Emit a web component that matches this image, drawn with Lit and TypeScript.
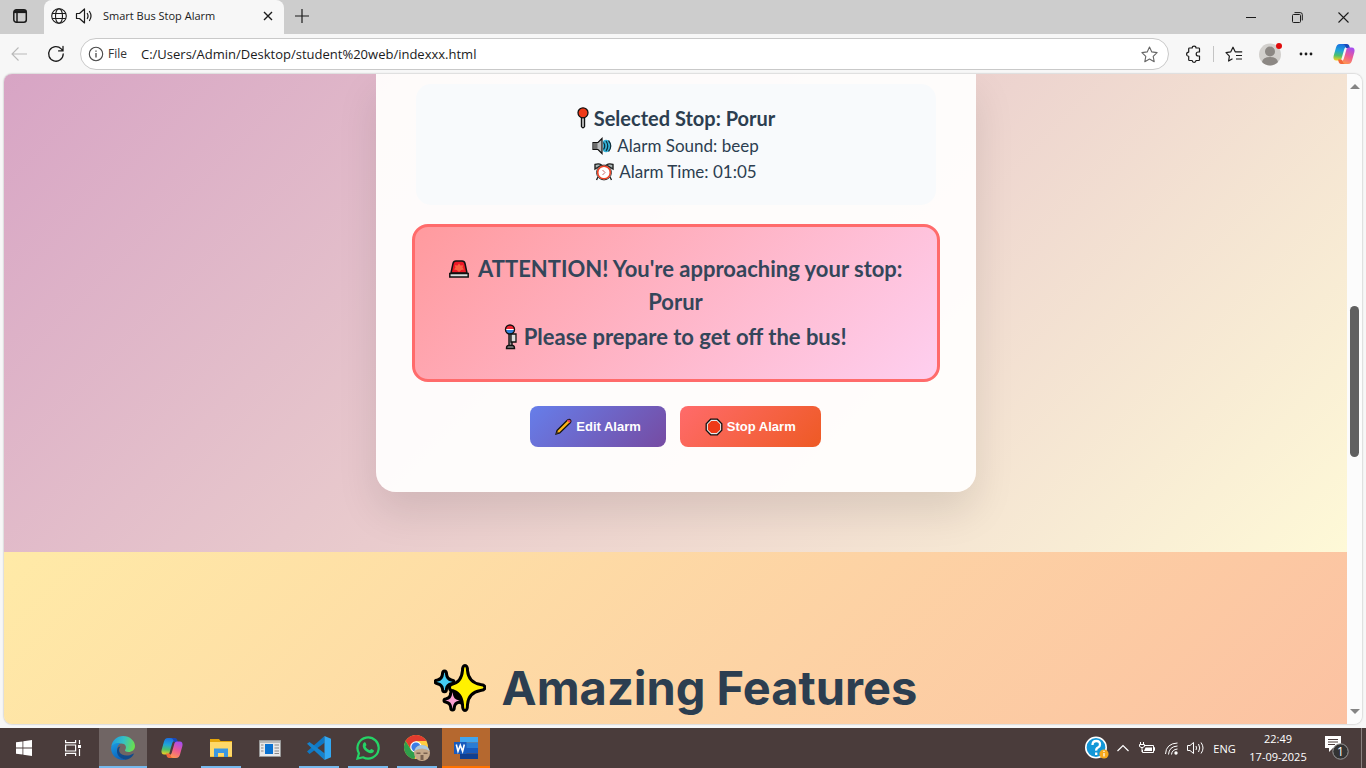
import { LitElement, html, css, svg } from "lit";
import { customElement } from "lit/decorators.js";

const copilot = (id: string) => svg`
  <defs>
    <linearGradient id="${id}a" x1="0.4" y1="0" x2="0.3" y2="1">
      <stop offset="0" stop-color="#1b6fe0"/><stop offset=".4" stop-color="#1fa5d8"/>
      <stop offset=".7" stop-color="#4dc06a"/><stop offset="1" stop-color="#f5d021"/>
    </linearGradient>
    <linearGradient id="${id}b" x1="0.7" y1="0" x2="0.3" y2="1">
      <stop offset="0" stop-color="#a64df0"/><stop offset=".5" stop-color="#ee5a92"/>
      <stop offset="1" stop-color="#ff9a4d"/>
    </linearGradient>
  </defs>
  <path d="M16 4.5C15.5 3 14.700 2 13 2H8C5.500 2 4.500 3.700 4 5.500L1.600 14C1 16.500 1.900 18.500 4.300 18.500H7c1.600 0 2.300-1 2.800-2.700L12 8c.6-2.200 1.600-3.500 4-3.500z" fill="url(#${id}a)"/>
  <path d="M12.500 2H14.800c2 0 2.300 1.400 2.800 3l.4 1.200h-3.500C13.300 5.500 13.500 2 10.500 2z" fill="#1a48b8"/>
  <path d="M8 19.500C8.500 21 9.300 22 11 22h5c2.500 0 3.500-1.700 4-3.500l2.400-8.500c.6-2.500-.3-4.500-2.700-4.500H17c-1.600 0-2.300 1-2.800 2.700L12 16c-.6 2.200-1.600 3.500-4 3.500z" fill="url(#${id}b)"/>
  <path d="M11.500 22H9.200c-2 0-2.300-1.400-2.800-3L6 17.500h3.500c1.200.7 1 4.500 4 4.500z" fill="#f2683a"/>`;

@customElement("browser-chrome")
class BrowserChrome extends LitElement {
  static styles = css`
    :host { display: block; font-family: "Open Sans", "Noto Sans", sans-serif; color: #1b1b1b; }
    button { border: 0; padding: 0; margin: 0; background: none; color: inherit; font: inherit;
      display: grid; place-items: center; }
    svg { display: block; }
    svg:not([stroke]) { fill: none; stroke: currentColor; }
    .strip { display: flex; height: 34px; background: #cdcdcd; }
    .menu { width: 40px; height: 32px; }
    .tab { display: flex; align-items: center; width: 240px; margin-left: 4px; padding: 0 8px 2px 7px;
      box-sizing: border-box; background: #f7f7f7; border-radius: 8px 8px 0 0; gap: 8px; }
    .title { flex: 1; font-size: 11px; line-height: 16px; white-space: nowrap; }
    .speaker { margin-right: 2px; }
    .shut { width: 16px; height: 20px; }
    .add { width: 35px; height: 32px; }
    .window { display: flex; margin-left: auto; }
    .window button { width: 46px; height: 34px; }
    .tools { display: flex; align-items: center; height: 40px; background: #f7f7f7; }
    .nav { width: 36px; height: 32px; }
    .back { width: 38px; color: #b9b9b9; }
    .address { flex: 1; display: flex; align-items: center; height: 32px; margin-left: 6px;
      box-sizing: border-box; border: 1px solid #c9c9c9; border-radius: 16px; background: #fff;
      padding: 0 10px 0 7px; }
    .address .site { display: flex; align-items: center; gap: 4px; color: #4a4a4a; }
    .kind { font-size: 12px; line-height: 16px; color: #333; }
    .url { flex: 1; min-width: 0; border: 0; outline: 0; background: none; padding: 0; margin-left: 14px;
      font: 13px/20px "Open Sans", "Noto Sans", sans-serif; color: #1b1b1b; }
    .extra { display: flex; align-items: center; padding: 0 2px 0 6px; }
    .extra button { width: 36px; height: 32px; }
    .rule { width: 1px; height: 16px; background: #c4c4c4; margin: 0 2px; }
    .extra .end { width: 40px; }
  `;

  render() {
    return html`
      <div class="strip">
        <button class="menu" aria-label="Tab actions">
          <svg width="16" height="16" viewBox="0 0 16 16" stroke-width="1.5"><rect x="1.800" y="1.800" width="12.500" height="12.500" rx="2.500"/><path d="M2 3.600h12" stroke-width="3"/><path d="M5 5v9"/></svg>
        </button>
        <div class="tab">
          <svg width="16" height="16" viewBox="0 0 16 16" stroke-width="1.1"><circle cx="8" cy="8" r="7.300"/><ellipse cx="8" cy="8" rx="3.500" ry="7.300"/><path d="M1.200 5.500h13.600M1.200 10.500h13.600"/></svg>
          <svg class="speaker" width="18" height="16" viewBox="0 0 18 16" stroke-width="1.2" stroke-linejoin="round" stroke-linecap="round"><path d="M1.500 5.500h3L9.500 1v14L4.500 10.500h-3zM12.300 5.500q1.500 2.500 0 5M14.500 3.500q3 4.500 0 9"/></svg>
          <span class="title">Smart Bus Stop Alarm</span>
          <button class="shut" aria-label="Close tab"><svg width="10" height="10" viewBox="0 0 10 10" stroke-width="1.400"><path d="M1 1l8 8M9 1L1 9"/></svg></button>
        </div>
        <button class="add" aria-label="New tab"><svg width="14" height="14" viewBox="0 0 14 14" stroke-width="1.200"><path d="M7 0v14M0 7h14"/></svg></button>
        <div class="window">
          <button aria-label="Minimise"><svg width="10" height="10" viewBox="0 0 10 10"><path d="M0 5.500h10"/></svg></button>
          <button aria-label="Restore"><svg width="11" height="11" viewBox="0 0 11 11"><rect x=".5" y="2.500" width="8" height="8" rx="1"/><path d="M2.500.6h5.800a2 2 0 0 1 2 2v5.800"/></svg></button>
          <button aria-label="Close"><svg width="11" height="11" viewBox="0 0 11 11" stroke-width="1.100"><path d="M.5.5l10 10M10.500.5l-10 10"/></svg></button>
        </div>
      </div>
      <div class="tools">
        <button class="nav back" aria-label="Back"><svg width="16" height="14" viewBox="0 0 16 14" stroke-width="1.100"><path d="M16 7H1M7.500.5L1 7l6.500 6.500"/></svg></button>
        <button class="nav" aria-label="Refresh"><svg width="18" height="18" viewBox="0 0 18 18" stroke-width="1.300" stroke-linecap="round"><path d="M16.200 9a7.300 7.300 0 1 1-2-5.100L16 5.800M16 1.500v4.400h-4.400"/></svg></button>
        <div class="address">
          <button class="site"><svg width="16" height="16" viewBox="0 0 16 16" stroke-width="1.100"><circle cx="8" cy="8" r="6.700"/><path d="M8 7v4.500M8 4.500v1.300" stroke-width="1.300"/></svg><span class="kind">File</span></button>
          <input class="url" aria-label="Address" value="C:/Users/Admin/Desktop/student%20web/indexxx.html">
          <button aria-label="Add to favourites"><svg width="17" height="17" viewBox="0 0 17 17" fill="none" stroke="#666" stroke-width="1.100" stroke-linejoin="round"><path d="M8.500 1l2.300 4.900 5.300.7-3.900 3.700 1 5.400-4.700-2.600-4.700 2.600 1-5.400L.9 6.600l5.300-.7z"/></svg></button>
        </div>
        <div class="extra">
          <button aria-label="Extensions"><svg width="17" height="18" viewBox="0 0 17 18" stroke-width="1.200" stroke-linejoin="round"><path d="M4.500 3h2.700a1.900 1.900 0 0 1 3.800 0h2.700q.8 0 .8.800V7h-1.300a2 2 0 0 0 0 4h1.300v3.700q0 .8-.8.800H11a1.900 1.900 0 0 1-3.800 0H4.500q-.8 0-.8-.8v-3.400a2.100 2.100 0 0 1 0-4.200V3.800q0-.8.8-.8z"/></svg></button>
          <span class="rule"></span>
          <button aria-label="Favourites"><svg width="18" height="17" viewBox="0 0 18 17" stroke-width="1.200" stroke-linejoin="round"><path d="M7.500 12.800L3.600 15l.8-4.900L1 6.600l4.800-.8L8 1.200l2.200 4.600h7M11 9.500h6M11 13h6"/></svg></button>
          <button aria-label="Profile"><svg width="25" height="24" viewBox="0 0 25 24" stroke="none"><circle cx="12" cy="12.500" r="11" fill="#d2d0cd"/><circle cx="12" cy="9.500" r="5" fill="#8c8884"/><path d="M4 20q1-5 8-5t8 5a11 11 0 0 1-16 0" fill="#8c8884"/><circle cx="21" cy="4" r="3" fill="#e00b0b"/></svg></button>
          <button aria-label="More"><svg width="14" height="4" viewBox="0 0 14 4" stroke="none" fill="#1b1b1b"><circle cx="2" cy="2" r="1.400"/><circle cx="7" cy="2" r="1.400"/><circle cx="12" cy="2" r="1.400"/></svg></button>
          <button class="end" aria-label="Copilot"><svg width="24" height="24" viewBox="0 0 24 24" stroke="none">${copilot("top")}</svg></button>
        </div>
      </div>`;
  }
}

@customElement("alarm-page")
class AlarmPage extends LitElement {
  static styles = css`
    :host { display: flex; flex-direction: column; min-width: 0; overflow: hidden; color: #2c3e50;
      font-family: Lato, "Open Sans", sans-serif; text-align: center; }
    svg { flex: none; }
    p, h2 { margin: 0; }
    .alarm { padding: 0 20px 60px;
      background: linear-gradient(135deg, #d299c2, #fef9d7) bottom / 100% 726px; }
    .card { max-width: 520px; margin: 0 auto; padding: 10px 40px 45px; border-radius: 0 0 20px 20px;
      background: rgba(255, 254, 253, 0.95); box-shadow: 0 20px 40px rgba(0, 0, 0, 0.1); }
    .info { padding: 19px 20px 20px; border-radius: 15px; background: #f8fafc; }
    .line { display: flex; align-items: center; justify-content: center; gap: 5px;
      font-size: 17px; line-height: 26px; }
    .stop { font-size: 20px; line-height: 30px; font-weight: 700; gap: 4px; }
    .alert { margin: 19px -4px 24px; padding: 25px 30px 26px; border: 3px solid #ff6b6b; border-radius: 16px;
      background: linear-gradient(135deg, #ff9a9e, #fecfef); font-size: 22px; line-height: 33px;
      font-weight: 700; color: #34465a; }
    .alert p + p { margin-top: 2px; }
    .alert svg { display: inline-block; vertical-align: -5px; }
    .siren { margin-right: 3px; }
    .actions { display: flex; justify-content: center; gap: 14px; }
    .act { display: flex; align-items: center; gap: 4px; height: 41px; border: 0; border-radius: 8px;
      padding: 0 25px; color: #fff; font: 700 13px/16px "Liberation Sans", Arial, sans-serif; }
    .edit { background: linear-gradient(135deg, #667eea, #764ba2); }
    .halt { background: linear-gradient(135deg, #ff6b6b, #ee5a24); }
    .features { flex: 1; padding-top: 100px;
      background: linear-gradient(135deg, #ffeaa7, #fab1a0) top / 100% 800px; }
    .heading { display: flex; align-items: center; justify-content: center; gap: 16px;
      font: 700 47px/72px Inter, sans-serif; }
  `;

  render() {
    return html`
      <section class="alarm">
        <div class="card">
          <div class="info">
            <p class="line stop">
              <svg width="14" height="22" viewBox="0 0 14 22"><path d="M5.500 10h3v9.500q-1.500 2.500-3 0z" fill="#d8d8d8" stroke="#111" stroke-width="1.400"/><circle cx="7" cy="5.800" r="5" fill="#f03a17" stroke="#111" stroke-width="1.300"/></svg>
              Selected Stop: Porur
            </p>
            <p class="line">
              <svg width="20" height="18" viewBox="0 0 20 18"><path d="M1 5.500h5l4-4v15l-4-4H1z" fill="#b9bcbe" stroke="#111" stroke-width="1.200"/><path d="M1.500 6h4v6h-4z" fill="#6d6d6d"/><path d="M11 4q3-2.500 6 0 3.500 5 0 10-3 2.500-6 0z" fill="#35b1d6"/><path d="M11.500 5.500q2.500 3.500 0 7M14 4q3.500 5 0 10M16.500 3.500q4.500 5.500 0 11" fill="none" stroke="#0b2d3a" stroke-width="1.200"/></svg>
              Alarm Sound: beep
            </p>
            <p class="line">
              <svg width="20" height="18" viewBox="0 0 20 18"><path d="M1 6V1.500q4-1.500 6.500.5zM19 6V1.500q-4-1.500-6.500.5zM4 14l-1.500 3M16 14l1.500 3" fill="#a9b5b5" stroke="#222" stroke-width="1.400"/><circle cx="10" cy="9.500" r="7.400" fill="#fff" stroke="#222" stroke-width="1"/><circle cx="10" cy="9.500" r="6.300" fill="#fff" stroke="#ee4023" stroke-width="1.600"/><path d="M8.500 7l2.500 2.500-2.500 2.500" fill="none" stroke="#c66" stroke-width="1"/></svg>
              Alarm Time: 01:05
            </p>
          </div>
          <div class="alert" role="alert">
            <p>
              <svg class="siren" width="22" height="22" viewBox="0 0 22 22"><path d="M3 13L5 3.500Q5.500 1 8 1h6q2.500 0 3 2.500L19 13z" fill="#ee1826" stroke="#111" stroke-width="1.500"/><path d="M11 3.500l1.500 2 2.700-.3-.7 2.300 1.500 2-2.700.5L11 12l-2.300-2-2.700-.5 1.500-2-.7-2.300 2.700.3z" fill="#f86041"/><path d="M1.800 13.500h18.400V17H1.800z" fill="#d9dcdc" stroke="#111" stroke-width="1.500"/></svg>
              ATTENTION! You're approaching your stop: Porur
            </p>
            <p>
              <svg width="14" height="26" viewBox="0 0 14 26"><path d="M5 9h3v13H5z" fill="#999" stroke="#111" stroke-width="1.400"/><circle cx="6" cy="5.500" r="4.500" fill="#2f7fd6"/><path d="M1.500 5.500a4.500 4.500 0 0 1 9 0z" fill="#ee2634"/><path d="M2 5.500h8" stroke="#fff" stroke-width="1"/><circle cx="6" cy="5.500" r="4.500" fill="none" stroke="#111" stroke-width="1.400"/><path d="M7 10h5v8H7z" fill="#ddd" stroke="#111" stroke-width="1.300"/><path d="M2.500 24.500q0-3 2-3h4q2 0 2 3z" fill="#888" stroke="#111" stroke-width="1.400"/></svg>
              Please prepare to get off the bus!
            </p>
          </div>
          <div class="actions">
            <button class="act edit"><svg width="17" height="17" viewBox="0 0 17 17"><path d="M2 12.500L12.500 2q2-1.200 3 .2.800 1.200-.3 2.500L4.700 15 1 16z" fill="#fcb317" stroke="#111" stroke-width="1.300"/><path d="M12 2.600L13.300 1.800q1.200-.4 2 .4.600 1 .1 1.800l-.9 1z" fill="#e83b5c"/><path d="M2.300 13l1.700 1.700L1 16z" fill="#6b4b2a"/></svg>Edit Alarm</button>
            <button class="act halt"><svg width="18" height="18" viewBox="0 0 18 18"><path d="M5.700 1.200h6.600l4.500 4.500v6.600l-4.500 4.500H5.700l-4.500-4.500V5.700z" fill="#ececec" stroke="#111" stroke-width="1.300"/><path d="M6.300 2.900h5.400l3.400 3.400v5.400l-3.400 3.400H6.300l-3.400-3.400V6.300z" fill="#f03a17"/></svg>Stop Alarm</button>
          </div>
        </div>
      </section>
      <section class="features">
        <h2 class="heading">
          <svg width="52" height="50" viewBox="0 0 52 50" stroke="#000" stroke-width="3" stroke-linejoin="round"><path d="M18 36l4-10 8 5-3 9z" fill="#000"/><path d="M31 2.500q2.500 0 2.500 5 1 12 13 14 4.500.5 4.500 3t-4.500 3q-12 2-13 14 0 6-2.500 6t-2.500-6q-1-12-11-14-2-.5-2-3t2-3q10-2 11-14 0-5 2.500-5z" fill="#fff100"/><path d="M10.500 8q2 0 2 3 .5 5 5 6 2.500.3 2.500 1.800t-2.500 2q-4.500 1-5 5 0 3-2 3t-2-3q-.5-4-5-5-2.500-.5-2.500-2t2.500-1.800q4.500-1 5-6 0-3 2-3z" fill="#44cdf3"/><path d="M18.500 28q1.800 0 1.800 2.500.5 4.500 4.500 5.300 2.200.3 2.200 1.700t-2.200 1.700q-4 .8-4.500 5 0 2.800-1.800 2.800t-1.800-2.800q-.5-4.200-4.500-5-2.200-.3-2.200-1.700t2.200-1.700q4-.8 4.500-5.300 0-2.500 1.800-2.500z" fill="#fa9fd0"/></svg>
          Amazing Features
        </h2>
      </section>`;
  }
}

@customElement("task-bar")
class TaskBar extends LitElement {
  static styles = css`
    :host { display: flex; height: 40px; background: #4a3c3b; color: #fff;
      font-family: "Open Sans", "Noto Sans", sans-serif; font-size: 12px; }
    button { border: 0; padding: 0; background: none; color: inherit; font: inherit;
      display: grid; place-items: center; position: relative; }
    svg { display: block; }
    .apps { display: flex; gap: 1px; }
    .app { width: 48px; }
    .view { margin-right: 1px; }
    .open::after { content: ""; position: absolute; left: 4px; right: 4px; bottom: 0; height: 2px; background: #76b9ed; }
    .active { background: #706564; }
    .active::after, .notify::after { left: 0; right: 0; }
    .notify { background: #b5682f; }
    .notify::after { background: #ff7200; }
    .tray { display: flex; margin-left: auto; }
    .cell { width: 24px; }
    .wide { width: 28px; }
    .tray .lang { width: 35px; font-size: 11px; }
    .tray .clock { width: 72px; line-height: 18px; font-size: 11px; align-content: center; }
    .notes { width: 45px; }
    .peek { width: 4px; margin-left: 2px; border-left: 1px solid #8a8180; }
  `;

  render() {
    return html`
      <div class="apps">
        <button class="app" aria-label="Start"><svg width="16" height="16" viewBox="0 0 16 16" fill="#fff"><path d="M0 2.300l6.500-.9v6.200H0zM7.300 1.300L16 0v7.600H7.300zM0 8.400h6.500v6.200L0 13.700zM7.300 8.400H16V16l-8.700-1.300z"/></svg></button>
        <button class="app view" aria-label="Task view"><svg width="16" height="16" viewBox="0 0 16 16" fill="none" stroke="#fff" stroke-width="1.200"><path d="M.6 0v2.600h10V0M.6 16v-2.600h10V16M.6 5h10v6H.6zM14.500 0v4M14.500 9v7"/><path d="M13 5h3v3h-3z" fill="#fff" stroke="none"/></svg></button>
        <button class="app open active" aria-label="Edge"><svg width="24" height="24" viewBox="0 0 24 24"><defs><linearGradient id="e1" x1="0" y1=".3" x2="1" y2=".5"><stop offset="0" stop-color="#1e9de0"/><stop offset=".5" stop-color="#35c1c5"/><stop offset="1" stop-color="#6be04c"/></linearGradient><linearGradient id="e2" x1="0" y1="0" x2=".5" y2="1"><stop offset="0" stop-color="#1b9be2"/><stop offset="1" stop-color="#0b63bd"/></linearGradient></defs><path d="M.3 10.500C1.200 4.500 6 0 12 0c7 0 12 5 12 10 0 3.800-3 6-6.500 6-3 0-4-1.200-3.300-2.300 1.800-2.500.5-6.200-4-6.200C5.500 7.500 2 9 .3 10.500z" fill="url(#e1)"/><path d="M.2 11C2 7.500 6 6.300 9.500 7.500c-3 1.500-4 5-3.200 8.300C7.300 20 11 23 14.500 23.700 6.500 25.200-.8 19 .2 11z" fill="url(#e2)"/><path d="M9.500 10.500c-2.500 2.500-1.500 6.500 1.500 8 3.300 1.700 7.500 1.300 11-.8.7-.4 1 .2.600.7-2 3.200-5 5-8 5.300C8 22.500 5 18 6.300 13c.6-1.700 1.700-2.500 3.200-2.500z" fill="#114a8b"/></svg></button>
        <button class="app" aria-label="Copilot"><svg width="24" height="24" viewBox="0 0 24 24">${copilot("task")}</svg></button>
        <button class="app open" aria-label="File Explorer"><svg width="22" height="20" viewBox="0 0 22 20"><path d="M0 1h9l1.500 2H22v16H0z" fill="#e5a50a"/><path d="M0 4h22v14.500H0z" fill="#ffd868"/><path d="M4 19v-8.500h14V19h-4v-4H8v4z" fill="#3b97e0"/></svg></button>
        <button class="app" aria-label="News"><svg width="22" height="17" viewBox="0 0 22 17"><path d="M.5.5h21v16H.5z" fill="#e8e8e8" stroke="#9a9a9a"/><path d="M1 1h20v2H1z" fill="#b8b8b8"/><path d="M6 4h8v10H6z" fill="#0a72d1"/><path d="M2 5h2.500M2 8h2.500M2 11h2.500M15.500 5H20M15.500 8H20M15.500 11H20M15.500 13.500H20" stroke="#888"/></svg></button>
        <button class="app open" aria-label="VS Code"><svg width="24" height="24" viewBox="0 0 24 24"><path d="M0 15.500L17.500 0v6.800L2.500 18z" fill="#0f78c4"/><path d="M0 7.800L2.500 6l15 11.200V24z" fill="#1583cd"/><path d="M17.500 0L24 2.700v18.600L17.500 24z" fill="#32a8f2"/></svg></button>
        <button class="app open" aria-label="WhatsApp"><svg width="24" height="24" viewBox="0 0 24 24"><path d="M1.500 22.600l1.400-5.300A10.600 10.600 0 1 1 7 21.300z" fill="none" stroke="#25d366" stroke-width="2.200"/><path d="M8 6.500c.8-.5 1.400-.3 1.700.5l.7 1.800c.2.600-.9 1.500-.9 1.800.8 1.700 2.300 3 4.100 3.600.5 0 1.200-1.500 1.700-1.300l2.200 1.100c.6.300.4 1.700-.2 2.300-2.200 2-5.400.6-7.500-1.200-2-1.800-3.500-4.200-3-6.200.1-.9.500-1.800 1.200-2.400z" fill="#25d366"/></svg></button>
        <button class="app open" aria-label="Chrome"><svg width="26" height="26" viewBox="0 0 26 26"><circle cx="12" cy="12" r="12" fill="#ffcd40"/><path d="M1.600 6A12 12 0 0 1 22.400 6H12L7 14.500z" fill="#e33b2e"/><path d="M1.600 6l5.600 9 4.800 2.500L10.500 24A12 12 0 0 1 1.600 6z" fill="#2f9e4b"/><circle cx="12" cy="12" r="5.800" fill="#fff"/><circle cx="12" cy="12" r="4.600" fill="#3c7de6"/><circle cx="18" cy="18" r="8" fill="#c4a88a"/><path d="M10.500 16q1.500-6 7.500-6t7.500 6q-3-2.500-7.500-2.500t-7.500 2.500z" fill="#a9c9e0"/><path d="M12.500 17.500h4v1.500h-4zM19.500 17.500h4v1.500h-4zM16.500 20h3v5h-3z" fill="#7a6250"/></svg></button>
        <button class="app open notify" aria-label="Word"><svg width="24" height="22" viewBox="0 0 24 22"><path d="M6 0h18v5.500H6z" fill="#41a5ee"/><path d="M6 5.500h18V11H6z" fill="#2b7cd3"/><path d="M6 11h18v5.500H6z" fill="#185abd"/><path d="M6 16.500h18V22H6z" fill="#103f91"/><path d="M0 5h12.500v12H0z" fill="#185abd"/><path d="M2.300 7.500L4 14.300l2.300-6 2.300 6 1.700-6.800" fill="none" stroke="#fff" stroke-width="1.600"/></svg></button>
      </div>
      <div class="tray">
        <button class="wide" aria-label="Help"><svg width="24" height="24" viewBox="0 0 24 24"><circle cx="11" cy="11.500" r="10.200" fill="#1297d8" stroke="#fff" stroke-width="1.600"/><path d="M7.500 9q0-4 3.800-4T15 8.500q0 2-2 3t-1.800 3.200M11.200 16.500v2.500" fill="none" stroke="#fff" stroke-width="2.300"/><circle cx="19" cy="18" r="4.600" fill="#f5a81c"/><path d="M19 17v3.500M19 14.800v1.200" stroke="#fff" stroke-width="1.200"/></svg></button>
        <button class="cell" aria-label="Hidden icons"><svg width="12" height="8" viewBox="0 0 12 8" fill="none" stroke="#fff" stroke-width="1.200"><path d="M.5 7L6 1.500 11.500 7"/></svg></button>
        <button class="cell" aria-label="Battery"><svg width="16" height="12" viewBox="0 0 16 12" fill="none" stroke="#fff"><path d="M5 3.500h9.500v7h-11V8M14.500 5.500h1v3h-1M1.500 0v2.500M4.500 0v2.500M.5 2.500h5v2q-2.500 2.500-5 0zM3 6v4"/><path d="M6.500 5.500H13v3.500H5z" fill="#fff" stroke="none"/></svg></button>
        <button class="cell" aria-label="Network"><svg width="13" height="13" viewBox="0 0 13 13" fill="none" stroke="#fff"><path d="M.5 12Q1 1.500 12.500 1M3.500 12.500Q4 4.500 12.500 4M6.500 12.500Q7 7.500 12.500 7" /><circle cx="11" cy="11" r="1.700" fill="#fff" stroke="none"/></svg></button>
        <button class="cell" aria-label="Volume"><svg width="17" height="14" viewBox="0 0 17 14" fill="none" stroke="#fff"><path d="M.5 4.500h2.500L6.500 1.500v11L3 9.500H.5zM9 5q1 2 0 4M11.500 3q2.500 4 0 8M14 1.500q4 5.500 0 11"/></svg></button>
        <button class="lang">ENG</button>
        <button class="clock"><span>22:49</span><span>17-09-2025</span></button>
        <button class="notes" aria-label="Notifications, 1 new"><svg width="24" height="24" viewBox="0 0 24 24"><path d="M0 0h16v12H8l-4 4v-4H0z" fill="#fff"/><path d="M3 3.500h10M3 6h10M3 8.500h7" stroke="#4a3c3b"/><circle cx="15.500" cy="15.500" r="7.700" fill="#333" stroke="#999"/><text x="15.500" y="20" fill="#fff" font-size="12" text-anchor="middle">1</text></svg></button>
        <div class="peek"></div>
      </div>`;
  }
}

@customElement("app-root")
class AppRoot extends LitElement {
  static styles = css`
    :host { display: flex; flex-direction: column; height: 100vh; overflow: hidden; background: #f7f7f7; }
    .frame { flex: 1; min-height: 0; display: flex; margin: 0 4px 4px; border-radius: 8px; overflow: hidden;
      box-shadow: 0 0 2px rgba(0, 0, 0, 0.35); }
    .page { flex: 1; }
    .scroll { display: flex; flex-direction: column; align-items: center;
      width: 15px; box-sizing: border-box; padding: 10px 0; background: #fcfcfc; }
    .thumb { width: 9px; height: 151px; border-radius: 5px; background: #606060; margin: 217px 0 auto; }
    .arrow { border: 5px solid transparent; border-top: 0; border-bottom: 5px solid #858585; }
    .down { transform: rotate(180deg); }
  `;

  render() {
    return html`
      <browser-chrome></browser-chrome>
      <div class="frame">
        <alarm-page class="page"></alarm-page>
        <div class="scroll">
          <span class="arrow"></span>
          <span class="thumb"></span>
          <span class="arrow down"></span>
        </div>
      </div>
      <task-bar></task-bar>`;
  }
}
